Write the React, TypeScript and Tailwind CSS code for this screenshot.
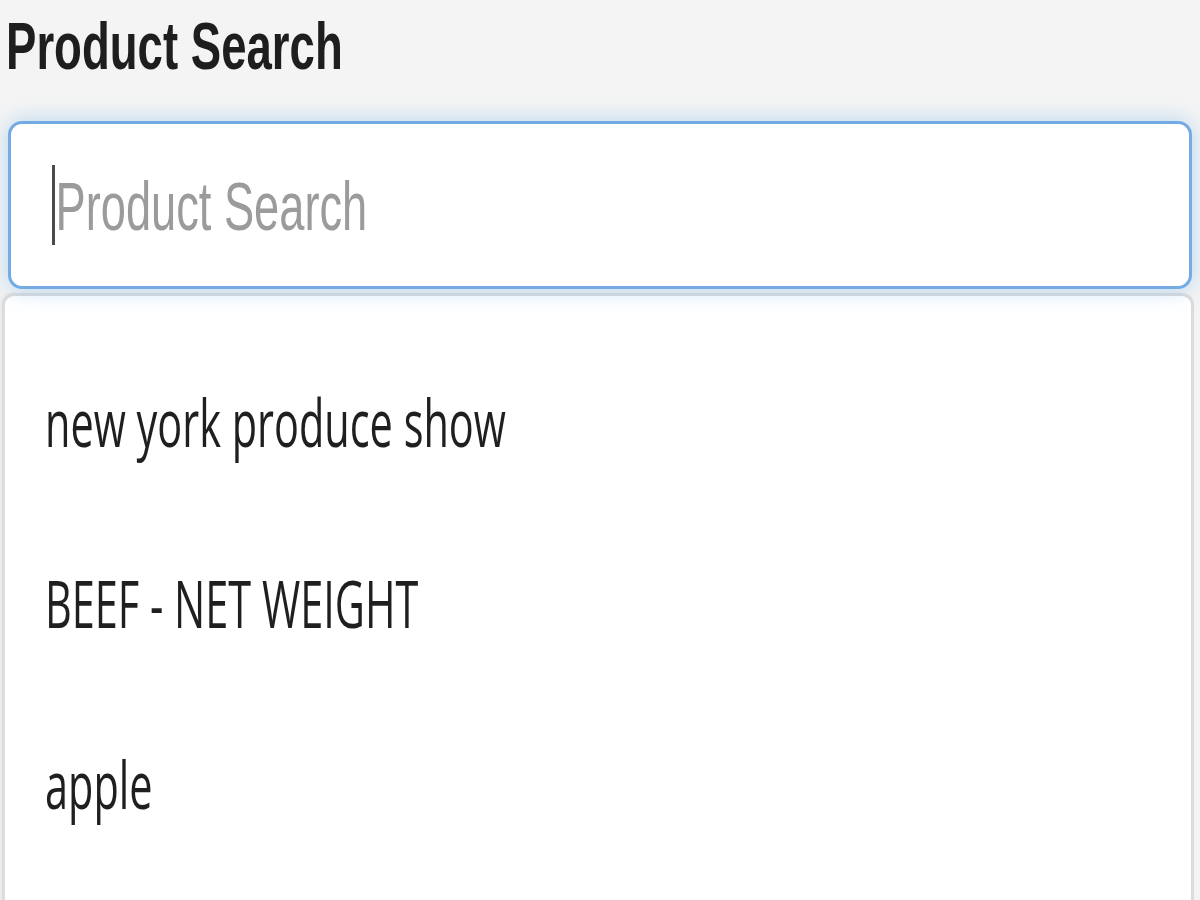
import { useState } from "react";

const suggestions = ["new york produce show", "BEEF - NET WEIGHT", "apple"];

export default function App() {
  const [query, setQuery] = useState("");

  return (
    <div className="min-h-screen bg-[#f4f4f4] overflow-hidden" style={{ fontFamily: '"Liberation Sans", Arial, sans-serif' }}>
      {/* Title */}
      <div className="pl-[6px] pt-[12px]">
        <span className="inline-block origin-left scale-x-[0.68] whitespace-nowrap text-[67px] font-bold leading-none text-[#1e1e1e]">
          Product Search
        </span>
      </div>

      {/* Search field */}
      <div className="relative mx-[8px] mt-[42px] h-[168px] overflow-hidden rounded-[14px] border-[3px] border-[#74abe4] bg-white shadow-[0_0_22px_rgba(102,175,233,0.45)]">
        <input
          value={query}
          onChange={(e) => setQuery(e.target.value)}
          placeholder="Product Search"
          className="block h-full w-[calc(100%/0.665)] origin-left scale-x-[0.665] bg-transparent pl-[67px] pt-[2px] text-[68px] text-[#333] outline-none placeholder:text-[#9b9b9b]"
          style={{ fontFamily: '"Liberation Sans", Arial, sans-serif' }}
        />
        {/* caret */}
        <div className="pointer-events-none absolute left-[41px] top-[41px] h-[80px] w-[3px] bg-[#4a4a4a]" />
      </div>

      {/* Dropdown */}
      <ul
        className="ml-[2px] mr-[6px] mt-[4px] h-[640px] rounded-[12px] border-[3px] border-[#dcdcdc] bg-white pt-[35px] shadow-[-2px_0_4px_rgba(0,0,0,0.06)]"
        style={{ fontFamily: '"Open Sans", "Noto Sans", sans-serif' }}
      >
        {suggestions.map((s) => (
          <li key={s} className="h-[181px] pl-[40px] text-[66px] leading-[181px] text-[#1f1f1f]">
            <span className="inline-block origin-left scale-x-[0.628] whitespace-nowrap">{s}</span>
          </li>
        ))}
      </ul>
    </div>
  );
}
